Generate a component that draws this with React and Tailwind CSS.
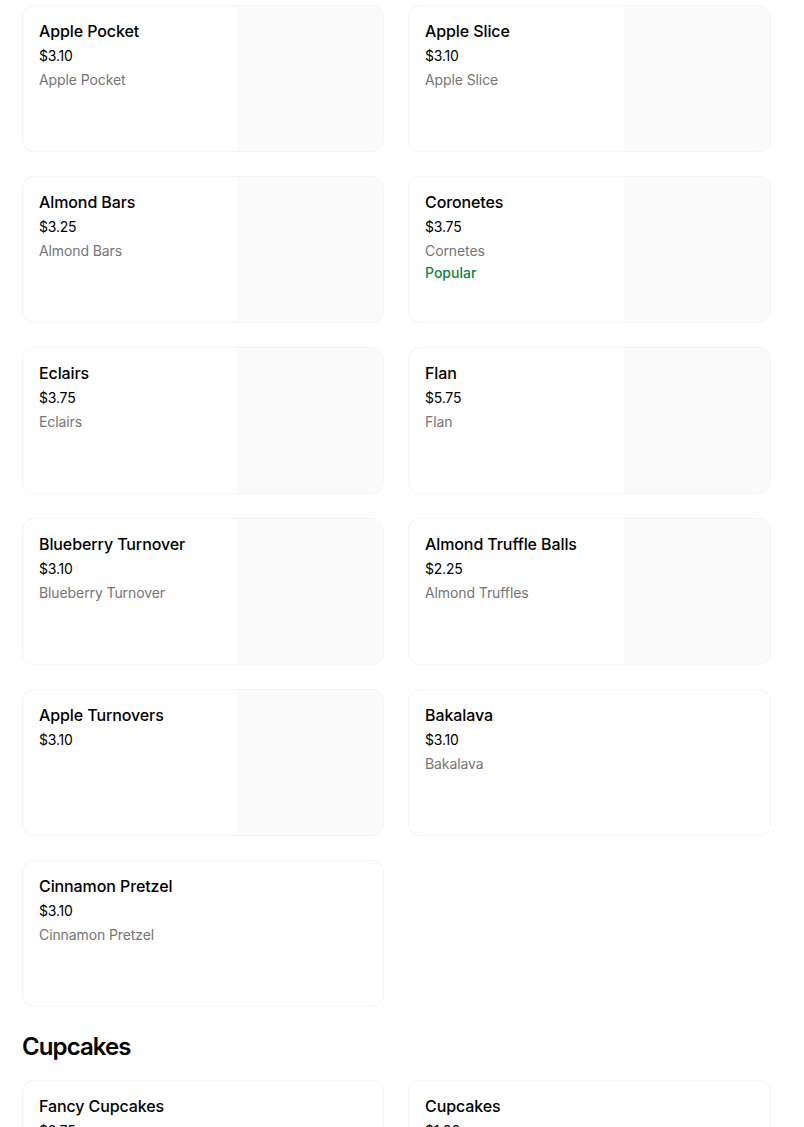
const pastries = [
  { name: "Apple Pocket", price: "$3.10", desc: "Apple Pocket", img: true },
  { name: "Apple Slice", price: "$3.10", desc: "Apple Slice", img: true },
  { name: "Almond Bars", price: "$3.25", desc: "Almond Bars", img: true },
  { name: "Coronetes", price: "$3.75", desc: "Cornetes", img: true, popular: true },
  { name: "Eclairs", price: "$3.75", desc: "Eclairs", img: true },
  { name: "Flan", price: "$5.75", desc: "Flan", img: true },
  { name: "Blueberry Turnover", price: "$3.10", desc: "Blueberry Turnover", img: true },
  { name: "Almond Truffle Balls", price: "$2.25", desc: "Almond Truffles", img: true },
  { name: "Apple Turnovers", price: "$3.10", img: true },
  { name: "Bakalava", price: "$3.10", desc: "Bakalava" },
  { name: "Cinnamon Pretzel", price: "$3.10", desc: "Cinnamon Pretzel" },
];

const cupcakes = [
  { name: "Fancy Cupcakes", price: "$3.75" },
  { name: "Cupcakes", price: "$1.00" },
];

const ItemCard = ({ item }) => (
  <div className="h-[147px] flex border border-[#f3f3f3] rounded-xl overflow-hidden bg-white">
    <div className="flex-1 min-w-0 pl-4 pr-3 pt-[14px]">
      <div className="text-[16px] leading-[22px] font-medium tracking-[-0.1px] text-black">{item.name}</div>
      <div className="mt-[4px] text-[14px] leading-[20px] tracking-[-0.2px] text-black">{item.price}</div>
      {item.desc && (
        <div className="mt-[4px] text-[14px] leading-[20px] tracking-[-0.1px] text-[#757575]">{item.desc}</div>
      )}
      {item.popular && (
        <div className="mt-[2px] text-[14px] leading-[20px] font-medium text-[#0e8345]">Popular</div>
      )}
    </div>
    {item.img && <div className="w-[146px] h-full bg-[#fafafa]" />}
  </div>
);

export default function App() {
  return (
    <div
      className="bg-white min-h-screen pl-[22px] pt-[5px] pb-10"
      style={{ fontFamily: "Inter, 'Noto Sans', sans-serif" }}
    >
      <div className="w-[749px]">
        <div className="grid grid-cols-[362px_363px] gap-x-6 gap-y-6">
          {pastries.map((item) => (
            <ItemCard key={item.name} item={item} />
          ))}
        </div>

        <h2 className="mt-6 mb-[17px] text-[24px] leading-[32px] font-semibold tracking-[-0.9px] text-black">
          Cupcakes
        </h2>

        <div className="grid grid-cols-[362px_363px] gap-x-6 gap-y-6">
          {cupcakes.map((item) => (
            <ItemCard key={item.name} item={item} />
          ))}
        </div>
      </div>
    </div>
  );
}
